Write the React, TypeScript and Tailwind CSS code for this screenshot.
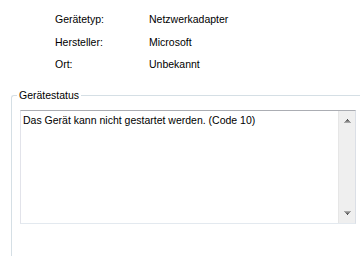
import React from 'react';

const rows = [
  { label: 'Gerätetyp:', value: 'Netzwerkadapter' },
  { label: 'Hersteller:', value: 'Microsoft' },
  { label: 'Ort:', value: 'Unbekannt' },
];

const ArrowUp = () => (
  <svg width="7" height="4" viewBox="0 0 7 4" shapeRendering="crispEdges">
    <rect x="3" y="0" width="1" height="1" fill="#4a4a4a" />
    <rect x="2" y="1" width="3" height="1" fill="#6a6a6a" />
    <rect x="1" y="2" width="5" height="1" fill="#8a8a8a" />
    <rect x="0" y="3" width="7" height="1" fill="#a8a8a8" />
  </svg>
);

const ArrowDown = () => (
  <svg width="7" height="4" viewBox="0 0 7 4" shapeRendering="crispEdges">
    <rect x="0" y="0" width="7" height="1" fill="#a8a8a8" />
    <rect x="1" y="1" width="5" height="1" fill="#8a8a8a" />
    <rect x="2" y="2" width="3" height="1" fill="#6a6a6a" />
    <rect x="3" y="3" width="1" height="1" fill="#4a4a4a" />
  </svg>
);

export default function App() {
  return (
    <div className="w-[360px] h-[256px] bg-white overflow-hidden text-[10.5px] leading-[13px] text-black font-['Liberation_Sans',Arial,sans-serif]">
      {/* Properties */}
      <div className="grid grid-cols-[94px_auto] gap-y-[9.5px] pl-[55px] pt-[13px]">
        {rows.map((row) => (
          <React.Fragment key={row.label}>
            <span>{row.label}</span>
            <span>{row.value}</span>
          </React.Fragment>
        ))}
      </div>

      {/* Group box */}
      <div className="relative ml-[11px] mt-[24px] w-[400px] h-[200px] border-l border-t border-[#d5dfe5] rounded-tl-[3px] pl-[8px] pt-[14px]">
        <span className="absolute -top-[7px] left-[5px] bg-white px-[2px]">Gerätestatus</span>

        <div className="flex w-[336px] h-[114px] border-t border-t-[#abadb3] border-l border-l-[#e2e3ea] border-r border-r-[#dbdfe6] border-b border-b-[#e3e9ef] bg-white">
          <div className="flex-1 px-[2px] pt-[3px]">Das Gerät kann nicht gestartet werden. (Code 10)</div>
          <div className="w-[17px] flex flex-col justify-between items-center bg-[#efefef] border-l border-[#e6e6e6] py-[8px]">
            <ArrowUp />
            <ArrowDown />
          </div>
        </div>
      </div>
    </div>
  );
}
